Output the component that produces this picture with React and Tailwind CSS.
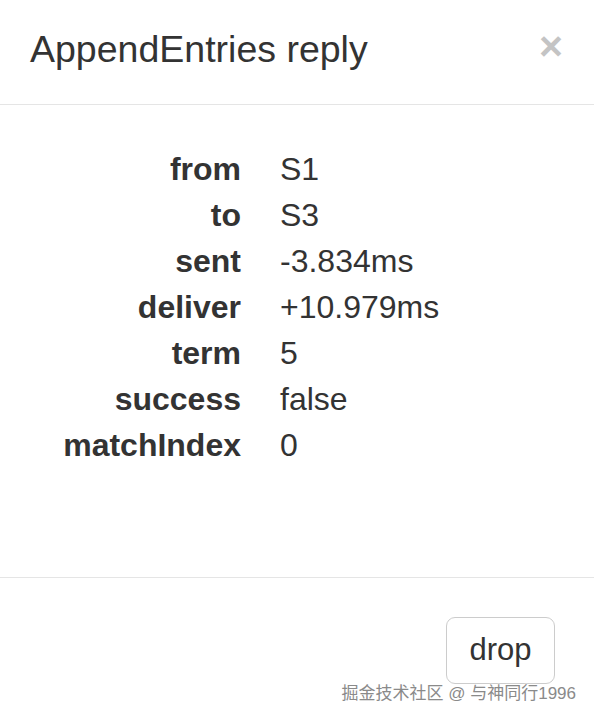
import React from "react";

const rows = [
  ["from", "S1"],
  ["to", "S3"],
  ["sent", "-3.834ms"],
  ["deliver", "+10.979ms"],
  ["term", "5"],
  ["success", "false"],
  ["matchIndex", "0"],
];

export default function App() {
  return (
    <div
      className="relative w-[594px] h-[720px] overflow-hidden bg-white text-[#333]"
      style={{ fontFamily: '"Liberation Sans", "Noto Sans CJK SC", Arial, sans-serif' }}
    >
      <div className="flex items-start justify-between border-b border-[#e5e5e5] pl-[30px] pr-[31px] pt-[29px] pb-[34px]">
        <h4 className="text-[37.5px] leading-[41px] font-normal">AppendEntries reply</h4>
        <button className="mt-[-3px] text-[41px] leading-[41px] font-bold text-[#c4c4c4]">×</button>
      </div>
      <div className="h-[472px] pt-[41px]">
        {rows.map(([k, v]) => (
          <div key={k} className="flex h-[46px] text-[32px] leading-[46px]">
            <div className="w-[241px] text-right font-bold">{k}</div>
            <div className="ml-[39px]">{v}</div>
          </div>
        ))}
      </div>
      <div className="flex justify-end border-t border-[#e5e5e5] pt-[39px] pr-[39px]">
        <button className="flex h-[67px] w-[109px] items-center justify-center rounded-[9px] border-[1.5px] border-[#cccccc] bg-white text-[31px] text-[#333]">
          drop
        </button>
      </div>
      <div
        className="absolute right-[18px] bottom-[16px] text-[17px] leading-[20px] text-[#8a8a8a]"
        style={{ textShadow: "0 0 2px #fff, 0 0 2px #fff" }}
      >
        掘金技术社区 @ 与神同行1996
      </div>
    </div>
  );
}
